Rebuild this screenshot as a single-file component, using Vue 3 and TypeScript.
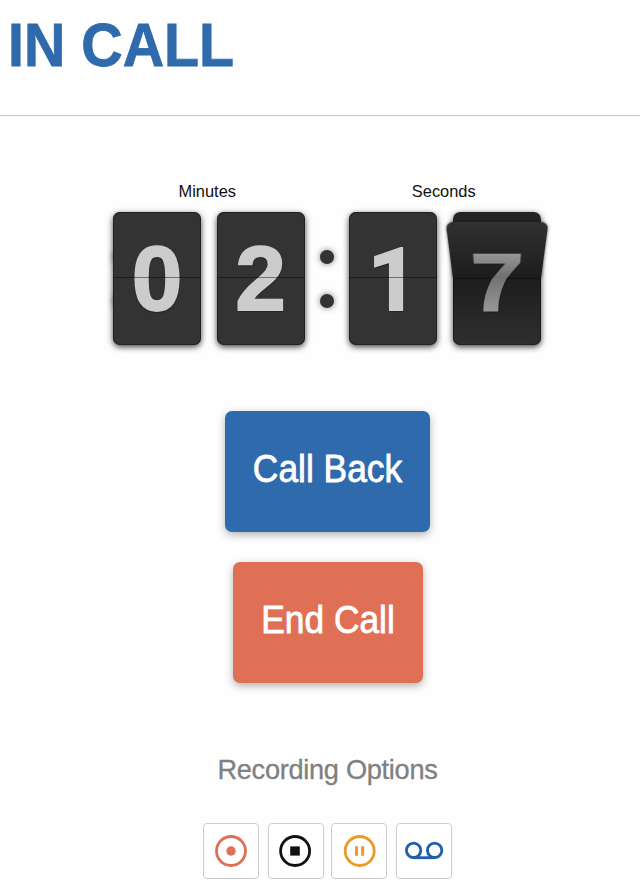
<script setup lang="ts">
interface Digit { value: string; flipping: boolean }
interface Group { label: string; digits: Digit[] }

const groups: Group[] = [
  { label: 'Minutes', digits: [{ value: '0', flipping: false }, { value: '2', flipping: false }] },
  { label: 'Seconds', digits: [{ value: '1', flipping: false }, { value: '7', flipping: true }] },
]
</script>

<template>
  <main class="screen">
    <header class="header">
      <h1>IN CALL</h1>
    </header>

    <section class="clock">
      <template v-for="group in groups" :key="group.label">
        <div class="divider" :class="{ first: group.label === 'Minutes' }">
          <span class="dot"></span>
          <span class="dot"></span>
        </div>
        <div class="group">
          <div class="label">{{ group.label }}</div>
          <div class="digits">
            <div v-for="(digit, i) in group.digits" :key="i" class="card" :class="{ flipping: digit.flipping }">
              <template v-if="digit.flipping">
                <div class="behind"></div>
                <div class="face half upper"><span>{{ digit.value }}</span></div>
                <div class="face half lower"><span>{{ digit.value }}</span></div>
              </template>
              <div v-else class="face" :class="{ one: digit.value === '1' }"><span>{{ digit.value }}</span></div>
            </div>
          </div>
        </div>
      </template>
    </section>

    <div class="actions">
      <button class="action back"><span>Call Back</span></button>
      <button class="action end"><span>End Call</span></button>
    </div>

    <h2>Recording Options</h2>
    <div class="tools">
      <button class="tool record" aria-label="Record">
        <svg viewBox="0 0 54 54"><circle cx="27" cy="27" r="14.5" /><circle class="solid" cx="27" cy="27" r="4.7" /></svg>
      </button>
      <button class="tool stop" aria-label="Stop">
        <svg viewBox="0 0 54 54"><circle cx="26.1" cy="27" r="14.5" /><rect class="solid" x="21.2" y="22.4" width="9.6" height="9.2" /></svg>
      </button>
      <button class="tool pause" aria-label="Pause">
        <svg viewBox="0 0 54 54"><circle cx="27.7" cy="27" r="14.5" /><path class="solid" d="M23 22.3h3v9.4h-3zM29.2 22.3h3v9.4h-3z" /></svg>
      </button>
      <button class="tool voicemail" aria-label="Voicemail">
        <svg viewBox="0 0 54 54"><circle cx="16.6" cy="26.3" r="7.2" /><circle cx="37.6" cy="26.3" r="7.2" /><path d="M16.6 33.7h21" /></svg>
      </button>
    </div>
  </main>
</template>

<style>
body { background: #fefefe; }
</style>

<style scoped>
* { box-sizing: border-box; }
.screen {
  width: 640px;
  height: 888px;
  overflow: hidden;
  font-family: "Liberation Sans", Arial, sans-serif;
}
.header {
  height: 116px;
  border-bottom: 1px solid #c6c6c6;
  padding: 12px 0 0 7.5px;
}
h1 {
  margin: 0;
  font-size: 61.5px;
  line-height: 66px;
  font-weight: 700;
  color: #2e6aac;
  -webkit-text-stroke: 0.8px #2e6aac;
  transform: scaleX(0.932);
  transform-origin: 0 50%;
}
.clock {
  display: flex;
  align-items: flex-end;
  padding-left: 113px;
  margin-top: 67px;
  height: 162px;
}
.group { position: relative; }
.label {
  height: 18px;
  margin-bottom: 11px;
  text-align: center;
  font-size: 16.4px;
  line-height: 17px;
  color: #111;
}
.group:nth-child(2) .label { padding-right: 3px; }
.group:nth-child(4) .label { padding-right: 2px; }
.digits { display: flex; gap: 15.5px; }
.card {
  position: relative;
  width: 88px;
  height: 133px;
  border-radius: 7px;
  box-shadow: 0 2px 6px rgba(0, 0, 0, 0.75);
  perspective: 312px;
  perspective-origin: 50% 66px;
}
.face {
  position: relative;
  height: 133px;
  border-radius: 7px;
  background: #333;
  color: #ccc;
  font-size: 91px;
  line-height: 133px;
  font-weight: 700;
  text-align: center;
  text-shadow: 0 1px 2px #000;
  -webkit-text-stroke: 1.8px #ccc;
  box-shadow: inset 0 0 0 1px #222;
}
.face span { display: block; height: 133px; }
.face.one {
  font-family: Roboto, "Liberation Sans", sans-serif;
  font-size: 88px;
  line-height: 135px;
}
.face::before {
  content: "";
  position: absolute;
  left: 0;
  right: 0;
  top: 65px;
  height: 1px;
  background: rgba(0, 0, 0, 0.45);
  z-index: 1;
}
.half {
  overflow: hidden;
  height: 66px;
}
.half::before { display: none; }
.upper {
  border-radius: 7px 7px 0 0;
  transform-origin: 50% 100%;
  transform: rotateX(-43.5deg);
  box-shadow: 0 0 3px rgba(0, 0, 0, 0.6);
}
.lower {
  height: 67px;
  border-radius: 0 0 7px 7px;
}
.lower span { margin-top: -66px; }
.behind {
  position: absolute;
  inset: 0 0 67px;
  border-radius: 7px 7px 0 0;
  background: #242424;
}
.half::after {
  content: "";
  position: absolute;
  inset: 0;
  background: linear-gradient(rgba(0, 0, 0, 0.06), rgba(0, 0, 0, 0.46));
}
.lower::after {
  background: linear-gradient(rgba(0, 0, 0, 0.44), rgba(0, 0, 0, 0.08));
}
.divider {
  display: flex;
  flex-direction: column;
  align-items: center;
  justify-content: center;
  gap: 30px;
  width: 44.5px;
  height: 133px;
}
.divider.first { margin-right: -44.5px; align-items: flex-start; }
.dot {
  width: 14px;
  height: 14px;
  border-radius: 50%;
  background: #333;
  box-shadow: 0 0 6px rgba(0, 0, 0, 0.5);
}
.actions {
  display: flex;
  flex-direction: column;
  align-items: center;
  gap: 30px;
  padding: 66px 0 0 15px;
}
.action {
  height: 121px;
  border: 0;
  padding: 0 0 5px;
  border-radius: 7px;
  color: #fff;
  font: 38px/42px "Liberation Sans", Arial, sans-serif;
  -webkit-text-stroke: 0.8px #fff;
  box-shadow: 0 3px 8px rgba(0, 0, 0, 0.3);
}
.action span {
  display: block;
  margin: 0 -10px;
  white-space: nowrap;
  transform: scaleX(0.93);
}
.back { width: 205px; background: #2e6aac; }
.end { width: 190px; background: #e07055; }
h2 {
  margin: 71px 0 0;
  padding-left: 15px;
  text-align: center;
  font-size: 27.2px;
  line-height: 31px;
  font-weight: 400;
  color: #808080;
  letter-spacing: -0.3px;
  -webkit-text-stroke: 0.3px #808080;
}
.tools {
  display: flex;
  gap: 9px;
  padding: 38px 0 0 203px;
}
.tool {
  width: 56px;
  height: 56px;
  padding: 0;
  border: 1px solid #ccc;
  border-radius: 4px;
  background: #fff;
}
.tool svg {
  display: block;
  width: 54px;
  height: 54px;
  fill: none;
  stroke: currentColor;
  stroke-width: 2.8;
}
.tool .solid { fill: currentColor; stroke: none; }
.record { color: #e07055; }
.stop { color: #111; }
.pause { color: #e99a27; margin-left: -2px; }
.voicemail { color: #205fa8; }
</style>
